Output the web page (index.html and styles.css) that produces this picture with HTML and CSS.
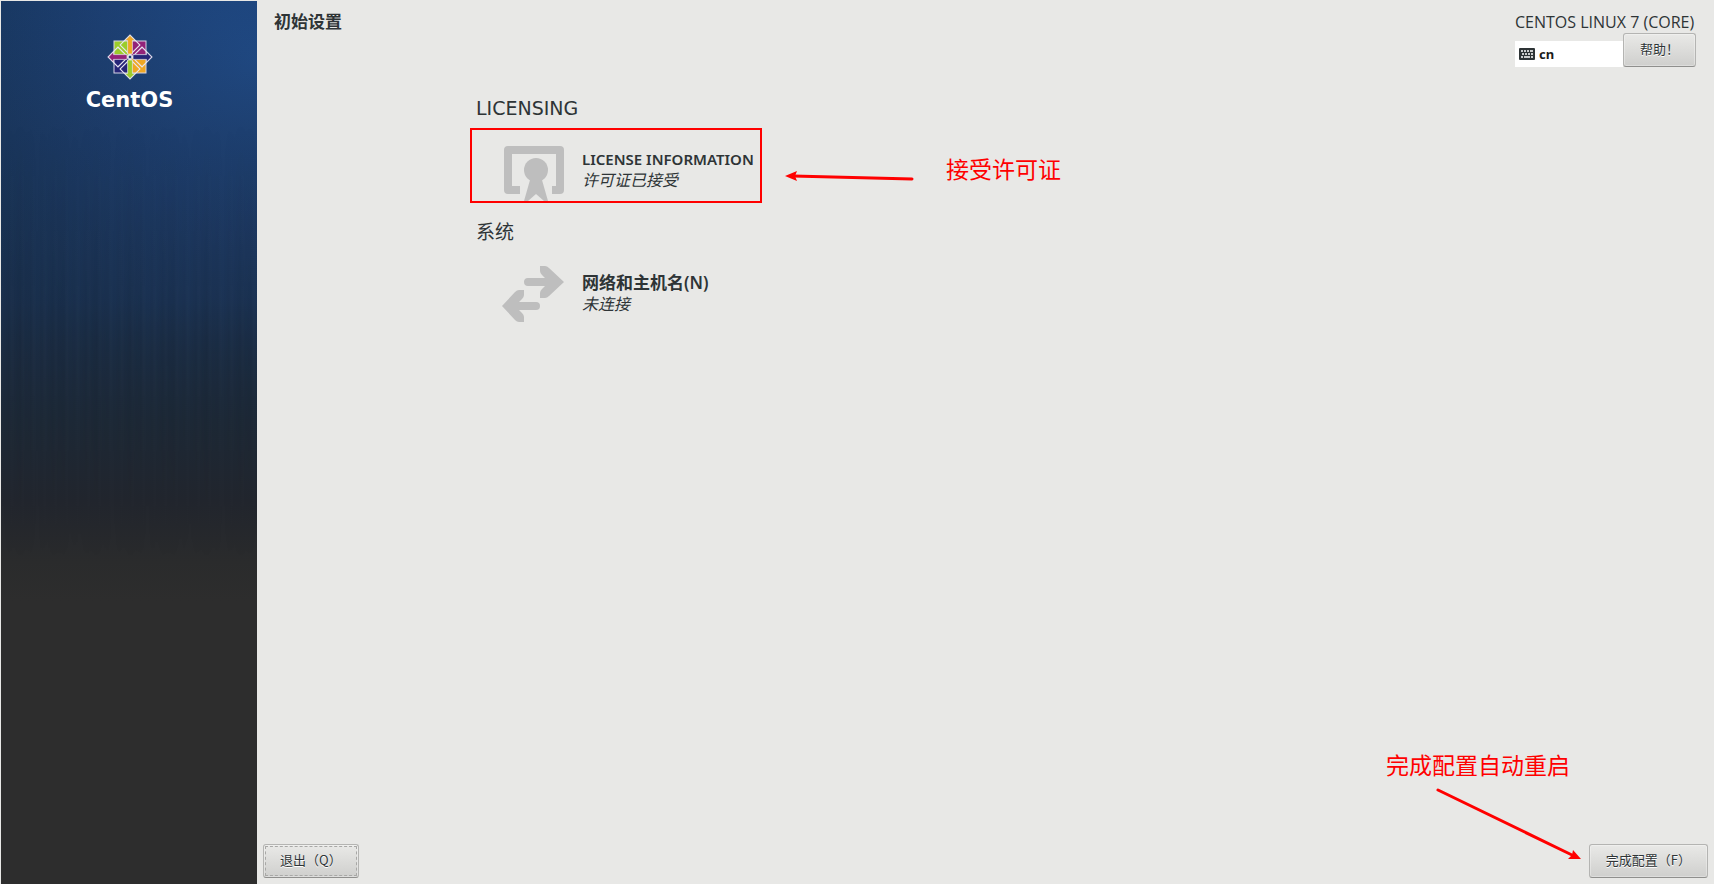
FILE: index.html
```html
<!DOCTYPE html>
<html lang="zh-CN">
<head>
	<meta charset="UTF-8">
	<title>初始设置</title>
	<link rel="stylesheet" href="styles.css">
</head>
<body>
	<div class="sidebar">
		<svg class="logo" viewBox="-24 -24 48 48">
			<g stroke="#d8d6e6" stroke-width="1">
				<rect x="-16" y="-16" width="15" height="15" fill="#9ccd2a"/>
				<rect x="1" y="-16" width="15" height="15" fill="#932279"/>
				<rect x="-16" y="1" width="15" height="15" fill="#262577"/>
				<rect x="1" y="1" width="15" height="15" fill="#efa724"/>
			</g>
			<g fill="none" stroke="#e8e6f0" stroke-width="1.1" transform="rotate(45)">
				<rect x="-15.5" y="-15.5" width="14" height="14"/>
				<rect x="1.5" y="-15.5" width="14" height="14"/>
				<rect x="-15.5" y="1.5" width="14" height="14"/>
				<rect x="1.5" y="1.5" width="14" height="14"/>
			</g>
			<g stroke="#e8e6f0" stroke-width=".7">
				<path d="M0-21.5 5-16.5H2.4V-3H-2.4V-16.5H-5Z" fill="#efa724"/>
				<path d="M0-21.5 5-16.5H2.4V-3H-2.4V-16.5H-5Z" fill="#262577" transform="rotate(90)"/>
				<path d="M0-21.5 5-16.5H2.4V-3H-2.4V-16.5H-5Z" fill="#9ccd2a" transform="rotate(180)"/>
				<path d="M0-21.5 5-16.5H2.4V-3H-2.4V-16.5H-5Z" fill="#932279" transform="rotate(270)"/>
				<rect x="-1.5" y="-1.5" width="3" height="3" fill="#1c3f72"/>
			</g>
		</svg>
		<div class="brand">CentOS</div>
	</div>

	<div class="main">
		<div class="header">
			<h1>初始设置</h1>
			<div class="product">
				<div class="product-name">CENTOS LINUX 7 (CORE)</div>
				<div class="tools">
					<button class="keyboard" type="button">
						<svg width="16" height="12" viewBox="0 0 16 12">
							<rect width="16" height="12" rx="1" fill="#2e3436"/>
							<path d="M2 3h2M5 3h2M8 3h2M11 3h3M3 6h2M6 6h2M9 6h2M12 6h2M2 9h2M5 9h6M12 9h2" stroke="#fff" stroke-width="1.6"/>
						</svg>
						cn
					</button>
					<button class="btn help" type="button">帮助！</button>
				</div>
			</div>
		</div>

		<div class="hub">
			<div class="section">
				<h2>LICENSING</h2>
				<div class="spoke marked">
					<svg class="icon" viewBox="0 0 64 59">
						<path d="M8 4H60Q64 4 64 8V48Q64 52 60 52H52V44H56V12H12V44H20V52H8Q4 52 4 48V8Q4 4 8 4Z"/>
						<circle cx="36" cy="28" r="12"/>
						<path d="M30 34H42V38L48 59H44L36 52 28 59H24L30 38Z"/>
					</svg>
					<div class="info">
						<a href="#license">LICENSE INFORMATION</a>
						<p>许可证已接受</p>
					</div>
					<div class="note note-license">
						<svg width="130" height="14" viewBox="0 0 130 14">
							<path d="M8 6 127 9" stroke="#f00" stroke-width="3" stroke-linecap="round"/>
							<path d="M0 6 12 1 10 6 12 11Z" fill="#f00"/>
						</svg>
						<span>接受许可证</span>
					</div>
				</div>
			</div>
			<div class="section">
				<h2>系统</h2>
				<div class="spoke">
					<svg class="icon" viewBox="0 0 64 59">
						<path d="M28 12H45L42 9Q40 7 40 5V0H45Q47 0 49 2L64 16 49 30Q47 32 45 32H40V27Q40 25 42 23L45 20H28Q24 20 24 16T28 12Z"/>
						<path d="M36 36H19L22 33Q24 31 24 29V24H19Q17 24 15 26L2 40 15 54Q17 56 19 56H24V51Q24 49 22 47L19 44H36Q40 44 40 40T36 36Z"/>
					</svg>
					<div class="info">
						<a class="zh" href="#network">网络和主机名(N)</a>
						<p>未连接</p>
					</div>
				</div>
			</div>
		</div>

		<div class="footer">
			<button class="btn quit" type="button">退出（Q）</button>
			<button class="btn" type="button">完成配置（F）</button>
			<div class="note note-finish">
				<span>完成配置自动重启</span>
				<svg width="150" height="78" viewBox="0 0 150 78">
					<path d="M4 4 138 69" stroke="#f00" stroke-width="3" stroke-linecap="round"/>
					<path d="M147 73 139 64 138 69 134 73Z" fill="#f00"/>
				</svg>
			</div>
		</div>
	</div>
</body>
</html>
```

FILE: styles.css
```css
*{
	margin: 0;
	padding: 0;
	box-sizing: border-box;
}
body{
	display: flex;
	min-height: 100vh;
	padding: 1px 0 0 1px;
	background: #e8e8e6;
	color: #2e3436;
	font-family: "Noto Sans", "Noto Sans CJK SC", sans-serif;
}

/* sidebar */
.sidebar{
	position: relative;
	flex: none;
	width: 256px;
	padding: 32px 0 0 1px;
	text-align: center;
	background:
		linear-gradient(to bottom, rgba(45,45,45,0) 0, rgba(30,40,56,.4) 300px, #1d2937 420px, #22262e 500px, #2a2b2c 560px, #2d2d2d 600px),
		radial-gradient(circle at 256px 60px, #1f4a86 0, #1c3f72 160px, #17355b 320px, #192d4c 480px);
}
.sidebar:before{
	content: "";
	position: absolute;
	left: 0;
	right: 0;
	top: 120px;
	height: 440px;
	background:
		repeating-linear-gradient(to right, rgba(255,255,255,.01) 0, rgba(255,255,255,0) 3px, rgba(0,0,0,.03) 8px, rgba(255,255,255,.01) 11px),
		repeating-linear-gradient(to right, rgba(0,0,0,0) 0, rgba(0,0,0,.05) 20px, rgba(0,0,0,0) 37px);
	-webkit-mask-image: linear-gradient(transparent, #000 50%, transparent);
	mask-image: linear-gradient(transparent, #000 50%, transparent);
}
.logo{
	display: block;
	width: 48px;
	height: 48px;
	margin: 0 auto;
}
.brand{
	margin-top: 7px;
	color: #fff;
	font: bold 21px/24px "DejaVu Sans", sans-serif;
}

/* main */
.main{
	flex: 1;
	display: flex;
	flex-direction: column;
}
.header{
	display: flex;
	justify-content: space-between;
	padding: 10px 18px 0 17px;
}
.header h1{
	font-size: 17px;
	line-height: 22px;
}
.product{
	width: 181px;
}
.product-name{
	font: 16px/22px "Open Sans", sans-serif;
	white-space: nowrap;
}
.tools{
	display: flex;
	align-items: flex-end;
}
.keyboard{
	flex: 1;
	display: flex;
	align-items: center;
	gap: 4px;
	height: 26px;
	padding: 0 4px 1px;
	border: 0;
	background: #fff;
	color: #1a1a1a;
	font: bold 13px "Noto Sans", sans-serif;
}
.btn{
	height: 34px;
	padding: 0 16px 4px;
	border: 1px solid #b4b4b2;
	border-bottom-color: #8f8f8d;
	border-radius: 3px;
	background: linear-gradient(#e9e9e7, #cfcfcd);
	box-shadow: inset 0 0 0 1px rgba(255,255,255,.3);
	color: #2e3436;
	font: 13px "Noto Sans CJK SC", sans-serif;
	text-shadow: 0 1px #fff;
}
.help{
	width: 73px;
	font-family: "Noto Sans CJK TC", sans-serif;
}
.quit{
	outline: 1px dashed #a8a8a6;
	outline-offset: -3px;
}

/* hub */
.hub{
	flex: 1;
	padding: 27px 0 0 213px;
}
.section{
	margin-bottom: 15px;
}
.section h2{
	margin: 0 0 6px 6px;
	font: 19px/28px "DejaVu Sans", "Noto Sans CJK SC", sans-serif;
}
.spoke{
	position: relative;
	display: flex;
	width: 292px;
	padding: 12px 0 0 28px;
	border: 2px solid transparent;
}
.marked{
	border-color: #f00;
}
.icon{
	flex: none;
	width: 64px;
	height: 59px;
	fill: #bebebe;
}
.info{
	padding: 6px 0 0 18px;
	line-height: 22px;
	white-space: nowrap;
}
.info a{
	display: block;
	color: #2e3436;
	font-size: 15px;
	font-weight: 600;
	text-decoration: none;
}
.info .zh{
	font-size: 17px;
}
.info p{
	font-size: 16px;
	font-style: italic;
	line-height: 20px;
}

/* footer */
.footer{
	position: relative;
	display: flex;
	justify-content: space-between;
	padding: 0 6px 6px;
}

/* red notes */
.note{
	position: absolute;
	color: #f00;
	font: 23px/32px "Noto Sans CJK SC", sans-serif;
	white-space: nowrap;
}
.note-license{
	left: 313px;
	top: 22px;
	display: flex;
	align-items: flex-end;
	gap: 31px;
}
.note-finish{
	right: 130px;
	bottom: 20px;
}
.note-finish span{
	display: block;
	margin: 0 14px 6px 0;
}
.note-finish svg{
	display: block;
	margin-left: auto;
}
```
